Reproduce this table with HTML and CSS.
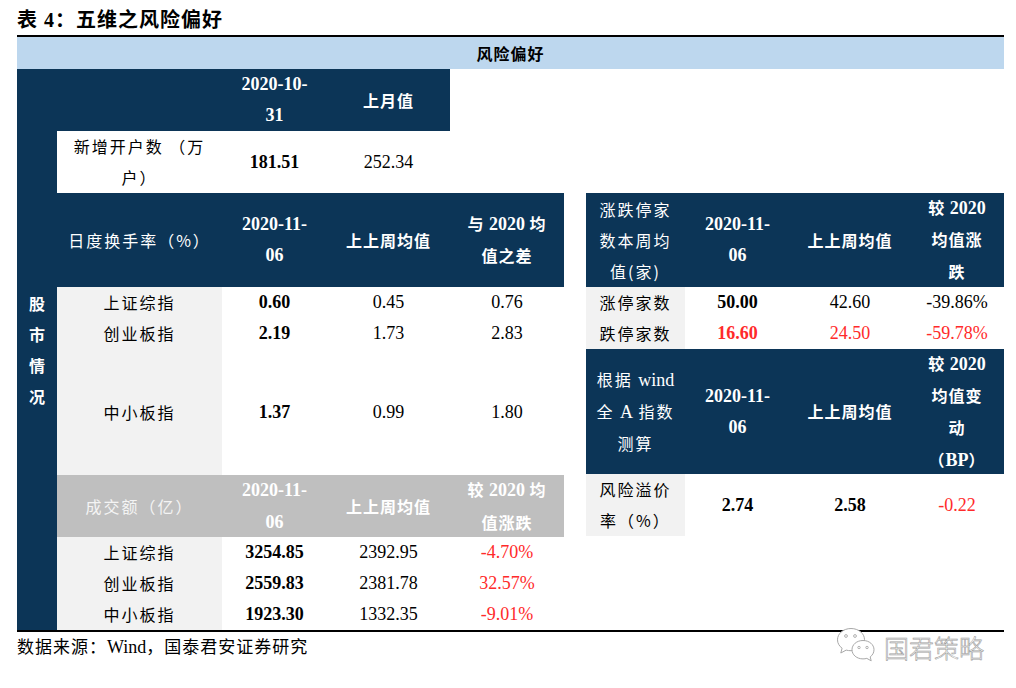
FILE: index.html
```html
<!DOCTYPE html>
<html lang="zh">
<head>
<meta charset="utf-8">
<title>表 4：五维之风险偏好</title>
<link rel="stylesheet" href="styles.css">
</head>
<body>
<div class="page">
  <h1 class="title">表 4：五维之风险偏好</h1>
  <div class="table">
    <div class="band">风险偏好</div>
    <div class="body">
      <div class="side"><span>股<br>市<br>情<br>况</span></div>
      <div class="main">
        <div class="grid g-top">
          <div class="c hd"></div>
          <div class="c hd">2020-10-<br>31</div>
          <div class="c hd"><span class="zh">上月值</span></div>
          <div class="c wh"><span class="zh">新增开户数 （万<br>户）</span></div>
          <div class="c wh b">181.51</div>
          <div class="c wh">252.34</div>
        </div>
        <div class="panels">
          <div class="grid g-left">
            <div class="c hdl"><span class="zh">日度换手率（%）</span></div>
            <div class="c hd">2020-11-<br>06</div>
            <div class="c hd"><span class="zh">上上周均值</span></div>
            <div class="c hd"><span><span class="zh">与</span> 2020 <span class="zh">均</span><br><span class="zh">值之差</span></span></div>

            <div class="c lb"><span class="zh">上证综指</span></div>
            <div class="c b">0.60</div>
            <div class="c">0.45</div>
            <div class="c">0.76</div>

            <div class="c lb"><span class="zh">创业板指</span></div>
            <div class="c b">2.19</div>
            <div class="c">1.73</div>
            <div class="c">2.83</div>

            <div class="c lb"><span class="zh">中小板指</span></div>
            <div class="c b">1.37</div>
            <div class="c">0.99</div>
            <div class="c">1.80</div>

            <div class="c ghl"><span class="zh">成交额（亿）</span></div>
            <div class="c gh">2020-11-<br>06</div>
            <div class="c gh"><span class="zh">上上周均值</span></div>
            <div class="c gh"><span><span class="zh">较</span> 2020 <span class="zh">均</span><br><span class="zh">值涨跌</span></span></div>

            <div class="c lb"><span class="zh">上证综指</span></div>
            <div class="c b">3254.85</div>
            <div class="c">2392.95</div>
            <div class="c red">-4.70%</div>

            <div class="c lb"><span class="zh">创业板指</span></div>
            <div class="c b">2559.83</div>
            <div class="c">2381.78</div>
            <div class="c red">32.57%</div>

            <div class="c lb"><span class="zh">中小板指</span></div>
            <div class="c b">1923.30</div>
            <div class="c">1332.35</div>
            <div class="c red">-9.01%</div>
          </div>

          <div class="grid g-right">
            <div class="c hdl"><span class="zh">涨跌停家<br>数本周均<br>值(家)</span></div>
            <div class="c hd">2020-11-<br>06</div>
            <div class="c hd"><span class="zh">上上周均值</span></div>
            <div class="c hd"><span><span class="zh">较</span> 2020<br><span class="zh">均值涨<br>跌</span></span></div>

            <div class="c lb"><span class="zh">涨停家数</span></div>
            <div class="c b">50.00</div>
            <div class="c">42.60</div>
            <div class="c">-39.86%</div>

            <div class="c lb"><span class="zh">跌停家数</span></div>
            <div class="c b red">16.60</div>
            <div class="c red">24.50</div>
            <div class="c red">-59.78%</div>

            <div class="c hdl"><span class="zh">根据 <span class="lat">wind</span><br>全 <span class="lat">A</span> 指数<br>测算</span></div>
            <div class="c hd">2020-11-<br>06</div>
            <div class="c hd"><span class="zh">上上周均值</span></div>
            <div class="c hd"><span><span class="zh">较</span> 2020<br><span class="zh">均值变<br>动</span><br><span class="zh">（</span>BP<span class="zh">）</span></span></div>

            <div class="c lb"><span class="zh">风险溢价<br>率（%）</span></div>
            <div class="c b">2.74</div>
            <div class="c b">2.58</div>
            <div class="c red">-0.22</div>
          </div>
        </div>
      </div>
    </div>
  </div>
  <p class="source">数据来源：<span class="lat">Wind</span>，国泰君安证券研究</p>

  <div class="watermark">
    <svg class="wx" width="40" height="36" viewBox="0 0 40 36">
      <path d="M15 1.5C7.3 1.5 1.5 6.6 1.5 12.8c0 3.4 1.8 6.4 4.6 8.4L4.8 26l5.4-2.9c1.5.4 3.1.6 4.8.6 7.7 0 13.5-5.1 13.5-11.1S22.7 1.5 15 1.5z" fill="#fff" stroke="#a8a8a8" stroke-width="1"/>
      <circle cx="10" cy="9" r="1.4" fill="#fff" stroke="#a8a8a8" stroke-width="0.9"/>
      <circle cx="19" cy="9" r="1.4" fill="#fff" stroke="#a8a8a8" stroke-width="0.9"/>
      <path d="M27 13.5c-6.3 0-11 4.1-11 9.2s4.7 9.2 11 9.2c1.3 0 2.6-.2 3.8-.5l4.4 2.4-1-3.9c2.3-1.7 3.8-4.2 3.8-7.2 0-5.1-4.7-9.2-11-9.2z" fill="#fff" stroke="#a8a8a8" stroke-width="1"/>
      <circle cx="23" cy="20.5" r="1.2" fill="#fff" stroke="#a8a8a8" stroke-width="0.9"/>
      <circle cx="31" cy="20.5" r="1.2" fill="#fff" stroke="#a8a8a8" stroke-width="0.9"/>
    </svg>
    <span class="wm-text">国君策略</span>
  </div>
</div>
</body>
</html>
```

FILE: styles.css
```css
* { box-sizing: border-box; }

body {
  margin: 0;
  background: #ffffff;
  color: #000000;
  font-family: "Liberation Serif", "Noto Sans CJK SC", serif;
  text-spacing-trim: space-all;
}

.page {
  position: relative;
  width: 1016px;
  height: 688px;
  padding: 8px 12px 0 17px;
}

.title {
  margin: 0 0 3px 0;
  font-size: 20px;
  line-height: 24px;
  font-weight: 700;
  letter-spacing: 1px;
  font-family: "Liberation Serif", "Noto Sans CJK SC", serif;
}

.table {
  width: 987px;
  border-top: 2px solid #000;
  border-bottom: 2px solid #000;
}

.band {
  height: 32px;
  background: #bdd7ee;
  display: flex;
  align-items: center;
  justify-content: center;
  font-size: 16px;
  font-weight: 700;
  letter-spacing: 1px;
}

.body {
  display: flex;
  height: 561px;
}

.side {
  width: 40px;
  background: #0c3557;
  color: #fff;
  font-weight: 700;
  font-size: 16px;
  line-height: 31px;
  display: flex;
  align-items: center;
  justify-content: center;
  text-align: center;
  padding-top: 2px;
}

.main {
  display: flex;
  flex-direction: column;
  flex: 1;
}

.grid {
  display: grid;
}

.g-top {
  grid-template-columns: 165px 105px 123px;
  grid-template-rows: 62px 62px;
  width: 393px;
}

.panels {
  display: flex;
  gap: 22px;
  align-items: flex-start;
}

.g-left {
  grid-template-columns: 165px 105px 123px 114px;
  grid-template-rows: 94px 31px 31px 126px 62px 31px 31px 31px;
  width: 507px;
}

.g-right {
  grid-template-columns: 99px 105px 120px 94px;
  grid-template-rows: 94px 31px 31px 125px 62px;
  width: 418px;
}

.c {
  display: flex;
  align-items: center;
  justify-content: center;
  text-align: center;
  font-size: 18px;
  line-height: 31px;
  background: #fff;
  white-space: nowrap;
}

.zh {
  font-size: 16px;
  letter-spacing: 2px;
  font-family: "Noto Sans CJK SC", sans-serif;
  text-spacing-trim: space-all;
}

.lat {
  font-family: "Liberation Serif", serif;
  font-size: 18px;
  letter-spacing: 0;
}

.hd {
  background: #0c3557;
  color: #fff;
  font-weight: 700;
  line-height: 31px;
}

.hd .zh { letter-spacing: 1px; }

.hdl {
  background: #0c3557;
  color: #fff;
  font-weight: 400;
}

.gh {
  background: #bfbfbf;
  color: #fff;
  font-weight: 700;
  line-height: 32px;
}

.gh .zh { letter-spacing: 1px; }

.ghl {
  background: #bfbfbf;
  color: #f4f4f4;
}

.lb {
  background: #f2f2f2;
}

.wh { background: #fff; }

.b { font-weight: 700; }

.red { color: #ff2a2a; }

.source {
  margin: 3px 0 0 0;
  font-size: 17px;
  line-height: 24px;
  letter-spacing: 1px;
  font-family: "Liberation Serif", "Noto Sans CJK SC", serif;
}

.source .lat { font-size: 18px; letter-spacing: 0; }

.watermark {
  position: absolute;
  left: 836px;
  top: 625px;
  display: flex;
  align-items: center;
  gap: 8px;
}

.wm-text {
  font-family: "Noto Sans CJK SC", sans-serif;
  font-size: 25px;
  font-weight: 300;
  color: #ffffff;
  -webkit-text-stroke: 0.6px #9c9c9c;
  letter-spacing: 0;
  margin-top: 4px;
}
```
